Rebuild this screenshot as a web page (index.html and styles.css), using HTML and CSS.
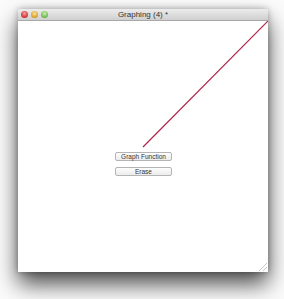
FILE: index.html
```html
<!DOCTYPE html>
<html lang="en">
<head>
<meta charset="utf-8"/>
<title>Graphing (4) *</title>
<link rel="stylesheet" href="styles.css">
</head>
<body>
<div class="window">
  <div class="titlebar">
    <div class="lights">
      <span class="light red"></span>
      <span class="light yellow"></span>
      <span class="light green"></span>
    </div>
    <div class="title">Graphing (4) *</div>
  </div>
  <div class="canvas">
    <svg class="plot" width="250" height="251" viewBox="0 0 250 251">
      <line x1="250" y1="0" x2="125" y2="126" stroke="#b0254a" stroke-width="1.2"/>
    </svg>
    <div class="controls">
      <button class="btn">Graph Function</button>
      <button class="btn">Erase</button>
    </div>
    <div class="grip"></div>
  </div>
</div>
</body>
</html>
```
FILE: styles.css
```css
* {
    box-sizing: border-box;
    margin: 0;
    padding: 0;
}
html {
    height: 100%;
}
body {
    height: 100%;
    background: #fbfbfb;
    font-family: 'Liberation Sans', Arial, sans-serif;
    padding: 9px 0 0 18px;
}
.window {
    width: 250px;
    height: 263px;
    background: #fff;
    display: flex;
    flex-direction: column;
    box-shadow: 0 12px 22px rgba(0, 0, 0, 0.7), 0 0 6px rgba(0, 0, 0, 0.3);
    border-radius: 3px 3px 0 0;
}
.titlebar {
    height: 12px;
    position: relative;
    background: linear-gradient(#ececec, #cfcfcf);
    border-bottom: 1px solid #a8a8a8;
    border-radius: 3px 3px 0 0;
    display: flex;
    align-items: center;
    justify-content: center;
}
.lights {
    position: absolute;
    left: 3px;
    top: 2px;
    display: flex;
    gap: 3px;
}
.light {
    width: 7px;
    height: 7px;
    border-radius: 50%;
    display: block;
}
.red {
    background: radial-gradient(circle at 50% 35%, #f7a0a0, #d93c3c 60%, #a02828);
}
.yellow {
    background: radial-gradient(circle at 50% 35%, #fbe0a0, #e0a830 60%, #a87a20);
}
.green {
    background: radial-gradient(circle at 50% 35%, #c8f0b0, #78c058 60%, #4a8a38);
}
.title {
    font-size: 8px;
    color: #333;
    line-height: 12px;
}
.canvas {
    flex: 1;
    position: relative;
}
.plot {
    position: absolute;
    left: 0;
    top: 0;
}
.controls {
    position: relative;
    display: flex;
    flex-direction: column;
    align-items: center;
    gap: 6px;
    padding-top: 131px;
    padding-left: 1px;
}
.btn {
    width: 57px;
    height: 9px;
    font-family: 'Liberation Sans', Arial, sans-serif;
    font-size: 6.5px;
    line-height: 7px;
    color: #333;
    background: linear-gradient(#fdfdfd, #ececec);
    border: 1px solid #b4b4b4;
    border-radius: 2px;
}
.grip {
    position: absolute;
    right: 1px;
    bottom: 1px;
    width: 8px;
    height: 8px;
    background: linear-gradient(135deg, transparent 45%, #c8c8c8 50%, transparent 55%, transparent 70%, #c8c8c8 75%, transparent 80%);
}
```
